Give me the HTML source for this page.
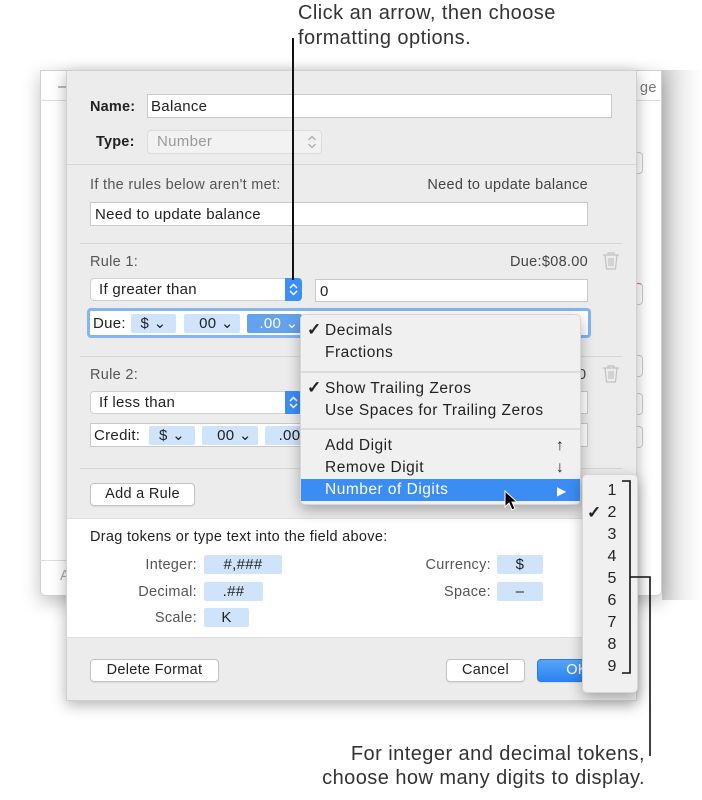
<!DOCTYPE html>
<html><head><meta charset="utf-8"><style>
*{box-sizing:border-box;margin:0;padding:0}
body{width:702px;height:800px;background:#fff;position:relative;overflow:hidden;font-family:"Liberation Sans",Helvetica,Arial,sans-serif;color:#222}
.a{position:absolute}
.t{position:absolute;font-size:14.5px;line-height:16px;white-space:nowrap;letter-spacing:.3px}
.fld{position:absolute;background:#fff;border:1px solid #c9c9c9}
.btn{position:absolute;background:#fff;border:1px solid #c4c4c4;border-radius:4px;font-size:14.5px;letter-spacing:.3px;text-align:center;line-height:20px;box-shadow:0 1px 1px rgba(0,0,0,.08)}
.sep{position:absolute;height:1px;background:#d6d6d6}
.tok{position:absolute;background:#cfe3fb;border-radius:2px;font-size:15px;text-align:center;line-height:19px;letter-spacing:.3px}
.mi{position:absolute;left:24px;font-size:15.5px;line-height:18px;color:#222;letter-spacing:.5px;white-space:nowrap}
.ck{position:absolute;left:6px;font-size:17px;font-weight:bold}
.num{position:absolute;left:22px;font-size:16px;width:14px;text-align:center}
.ann{position:absolute;font-size:20px;color:#333;line-height:24px;white-space:nowrap;letter-spacing:.45px}
</style></head><body>
<div class="ann" style="left:298px;top:1px">Click an arrow, then choose</div>
<div class="ann" style="left:298px;top:26px">formatting options.</div>

<!-- background window -->
<div class="a" style="left:662px;top:70px;width:40px;height:530px;background:linear-gradient(90deg,#d0d0d0,#f2f2f2 60%,#fff)"></div>
<div class="a" style="left:40px;top:70px;width:622px;height:526px;background:#fff;border:1px solid #cfcfcf;border-radius:0 0 5px 5px;box-shadow:0 6px 18px rgba(0,0,0,.25)"></div>
<div class="a" style="left:40px;top:100px;width:622px;height:1px;background:#ddd"></div>
<div class="t" style="left:58px;top:79px;color:#777">–</div>
<div class="t" style="left:640px;top:80px;color:#777">ge</div>
<div class="a" style="left:40px;top:560px;width:26px;height:1px;background:#ddd"></div>
<div class="t" style="left:60px;top:568px;color:#aaa">A</div>
<div class="a" style="left:637px;top:152px;width:6px;height:22px;border:1px solid #ccc;border-left:0;border-radius:0 4px 4px 0"></div>
<div class="a" style="left:637px;top:283px;width:6px;height:22px;border:1px solid #ccc;border-left:0;border-radius:0 4px 4px 0;border-top-color:#e66"></div>
<div class="a" style="left:637px;top:355px;width:6px;height:22px;border:1px solid #ccc;border-left:0;border-radius:0 4px 4px 0"></div>
<div class="a" style="left:637px;top:393px;width:6px;height:22px;border:1px solid #ccc;border-left:0;border-radius:0 4px 4px 0"></div>
<div class="a" style="left:637px;top:426px;width:6px;height:22px;border:1px solid #ccc;border-left:0;border-radius:0 4px 4px 0"></div>

<!-- sheet -->
<div class="a" style="left:66px;top:70px;width:571px;height:631px;background:#ececec;border:1px solid #d0d0d0;box-shadow:0 4px 14px rgba(0,0,0,.3)"></div>
<div class="t" style="left:90px;top:99px;font-weight:bold;letter-spacing:.2px">Name:</div>
<div class="fld" style="left:147px;top:94px;width:465px;height:24px"></div>
<div class="t" style="left:151px;top:99px;font-size:15px">Balance</div>
<div class="t" style="left:96px;top:134px;font-weight:bold;letter-spacing:.2px">Type:</div>
<div class="a" style="left:147px;top:130px;width:175px;height:24px;background:#f2f2f2;border:1px solid #dcdcdc;border-radius:4px"></div>
<div class="t" style="left:157px;top:134px;font-size:15px;color:#9a9a9a">Number</div>
<svg class="a" style="left:306px;top:134px" width="12" height="16" viewBox="0 0 12 16" fill="none" stroke="#aaa" stroke-width="1.3"><path d="M2.5 6L6 2.5 9.5 6M2.5 10L6 13.5 9.5 10"/></svg>
<div class="sep" style="left:67px;top:164px;width:569px"></div>
<div class="t" style="left:90px;top:177px;color:#555">If the rules below aren't met:</div>
<div class="t" style="right:114px;top:177px;color:#444">Need to update balance</div>
<div class="fld" style="left:90px;top:202px;width:498px;height:24px"></div>
<div class="t" style="left:95px;top:207px;font-size:15px">Need to update balance</div>
<div class="sep" style="left:80px;top:243px;width:542px"></div>

<div class="t" style="left:90px;top:254px;color:#555">Rule 1:</div>
<div class="t" style="right:114px;top:254px;color:#444">Due:$08.00</div>
<svg class="a" style="left:602px;top:251px" width="18" height="20" viewBox="0 0 18 20" fill="none" stroke="#c2c2c2" stroke-width="1.2"><path d="M1 4h16M6 4V2h6v2M3 4l1.5 14h9L15 4M7 7v8M9 7v8M11 7v8"/></svg>
<div class="a" style="left:90px;top:278px;width:212px;height:23px;background:#fff;border:1px solid #d0d0d0;border-radius:4px"></div>
<div class="a" style="left:285px;top:278px;width:17px;height:23px;background:#3d8ef5;border-radius:0 4px 4px 0"></div>
<svg class="a" style="left:287px;top:282px" width="13" height="15" viewBox="0 0 13 15" fill="none" stroke="#fff" stroke-width="1.5"><path d="M3 6l3.5-3.5L10 6M3 9l3.5 3.5L10 9"/></svg>
<div class="t" style="left:99px;top:282px;font-size:15px">If greater than</div>
<div class="fld" style="left:315px;top:279px;width:273px;height:23px"></div>
<div class="t" style="left:320px;top:284px;font-size:15px">0</div>
<div class="a" style="left:87px;top:308px;width:504px;height:30px;border:3px solid #84b5ee;border-radius:4px;background:#fff"></div>
<div class="t" style="left:93px;top:316px;font-size:15px">Due:</div>
<div class="tok" style="left:131px;top:314px;width:45px">$ ⌄</div>
<div class="tok" style="left:184px;top:314px;width:56px">&nbsp;&nbsp;00 ⌄</div>
<div class="tok" style="left:247px;top:314px;width:55px;background:#64a3ec;color:#fff">&nbsp;&nbsp;.00 ⌄</div>
<div class="sep" style="left:80px;top:356px;width:542px"></div>

<div class="t" style="left:90px;top:367px;color:#555">Rule 2:</div>
<div class="t" style="left:578px;top:367px;color:#444">0</div>
<svg class="a" style="left:602px;top:364px" width="18" height="20" viewBox="0 0 18 20" fill="none" stroke="#c2c2c2" stroke-width="1.2"><path d="M1 4h16M6 4V2h6v2M3 4l1.5 14h9L15 4M7 7v8M9 7v8M11 7v8"/></svg>
<div class="a" style="left:90px;top:391px;width:212px;height:23px;background:#fff;border:1px solid #d0d0d0;border-radius:4px"></div>
<div class="a" style="left:285px;top:391px;width:17px;height:23px;background:#3d8ef5;border-radius:0 4px 4px 0"></div>
<svg class="a" style="left:287px;top:395px" width="13" height="15" viewBox="0 0 13 15" fill="none" stroke="#fff" stroke-width="1.5"><path d="M3 6l3.5-3.5L10 6M3 9l3.5 3.5L10 9"/></svg>
<div class="t" style="left:99px;top:395px;font-size:15px">If less than</div>
<div class="fld" style="left:315px;top:391px;width:273px;height:23px"></div>
<div class="fld" style="left:90px;top:423px;width:498px;height:24px"></div>
<div class="t" style="left:94px;top:428px;font-size:15px">Credit:</div>
<div class="tok" style="left:149px;top:426px;width:46px">$ ⌄</div>
<div class="tok" style="left:202px;top:426px;width:56px">&nbsp;&nbsp;00 ⌄</div>
<div class="tok" style="left:265px;top:426px;width:40px">&nbsp;&nbsp;.00</div>
<div class="sep" style="left:80px;top:468px;width:542px"></div>
<div class="btn" style="left:90px;top:483px;width:105px;height:23px">Add a Rule</div>

<div class="a" style="left:67px;top:518px;width:569px;height:120px;background:#fff;border-top:1px solid #ddd;border-bottom:1px solid #ddd"></div>
<div class="t" style="left:90px;top:529px">Drag tokens or type text into the field above:</div>
<div class="t" style="right:505px;top:557px;color:#555">Integer:</div>
<div class="tok" style="left:204px;top:555px;width:78px">#,###</div>
<div class="t" style="right:505px;top:584px;color:#555">Decimal:</div>
<div class="tok" style="left:204px;top:582px;width:59px">.##</div>
<div class="t" style="right:505px;top:610px;color:#555">Scale:</div>
<div class="tok" style="left:204px;top:608px;width:45px">K</div>
<div class="t" style="right:211px;top:557px;color:#555">Currency:</div>
<div class="tok" style="left:497px;top:555px;width:46px">$</div>
<div class="t" style="right:211px;top:584px;color:#555">Space:</div>
<div class="tok" style="left:497px;top:582px;width:46px">–</div>

<div class="btn" style="left:90px;top:659px;width:129px;height:23px">Delete Format</div>
<div class="btn" style="left:446px;top:659px;width:79px;height:23px">Cancel</div>
<div class="btn" style="left:537px;top:659px;width:80px;height:23px;background:linear-gradient(#58a3f7,#2a84f2);border-color:#2a7de8;color:#fff">OK</div>

<!-- menu -->
<div class="a" style="left:300px;top:314px;width:281px;height:191px;background:#f0f0f0;border:1px solid #d6d6d6;border-radius:5px;box-shadow:0 5px 14px rgba(0,0,0,.3)">
<div class="ck" style="top:5px">✓</div><div class="mi" style="top:7px">Decimals</div>
<div class="mi" style="top:29px">Fractions</div>
<div class="a" style="left:0;top:56px;width:279px;height:2px;background:#dcdcdc"></div>
<div class="ck" style="top:63px">✓</div><div class="mi" style="top:65px">Show Trailing Zeros</div>
<div class="mi" style="top:87px">Use Spaces for Trailing Zeros</div>
<div class="a" style="left:0;top:113px;width:279px;height:2px;background:#dcdcdc"></div>
<div class="mi" style="top:122px">Add Digit</div><div class="mi" style="left:255px;top:122px;font-weight:bold">↑</div>
<div class="mi" style="top:144px">Remove Digit</div><div class="mi" style="left:255px;top:144px;font-weight:bold">↓</div>
<div class="a" style="left:0;top:164px;width:279px;height:22px;background:#3b8cf3"></div>
<div class="mi" style="top:166px;color:#fff">Number of Digits</div>
<div class="mi" style="left:256px;top:167px;color:#fff;font-size:12px">▶</div>
</div>
<svg class="a" style="left:504px;top:490px" width="14" height="22" viewBox="0 0 14 22"><path d="M1 1v16l4-4 3 7 3-1.5-3-6.5h5z" fill="#000" stroke="#fff" stroke-width="1"/></svg>

<!-- submenu -->
<div class="a" style="left:582px;top:474px;width:56px;height:219px;background:#f0f0f0;border:1px solid #d6d6d6;border-radius:5px;box-shadow:0 5px 14px rgba(0,0,0,.3)">
<div class="num" style="top:7px">1</div>
<div class="ck" style="left:4px;top:28px">✓</div><div class="num" style="top:29px">2</div>
<div class="num" style="top:51px">3</div>
<div class="num" style="top:73px">4</div>
<div class="num" style="top:95px">5</div>
<div class="num" style="top:117px">6</div>
<div class="num" style="top:139px">7</div>
<div class="num" style="top:161px">8</div>
<div class="num" style="top:183px">9</div>
</div>

<!-- annotation lines -->
<div class="a" style="left:292px;top:38px;width:2px;height:242px;background:#111"></div>
<svg class="a" style="left:0;top:0" width="702" height="800"><path d="M622 481H630V673H622M630 577H650V756" fill="none" stroke="#111" stroke-width="1.6"/></svg>
<div class="ann" style="right:57px;top:742px;text-align:right">For integer and decimal tokens,</div>
<div class="ann" style="right:57px;top:766px;text-align:right">choose how many digits to display.</div>
</body></html>
